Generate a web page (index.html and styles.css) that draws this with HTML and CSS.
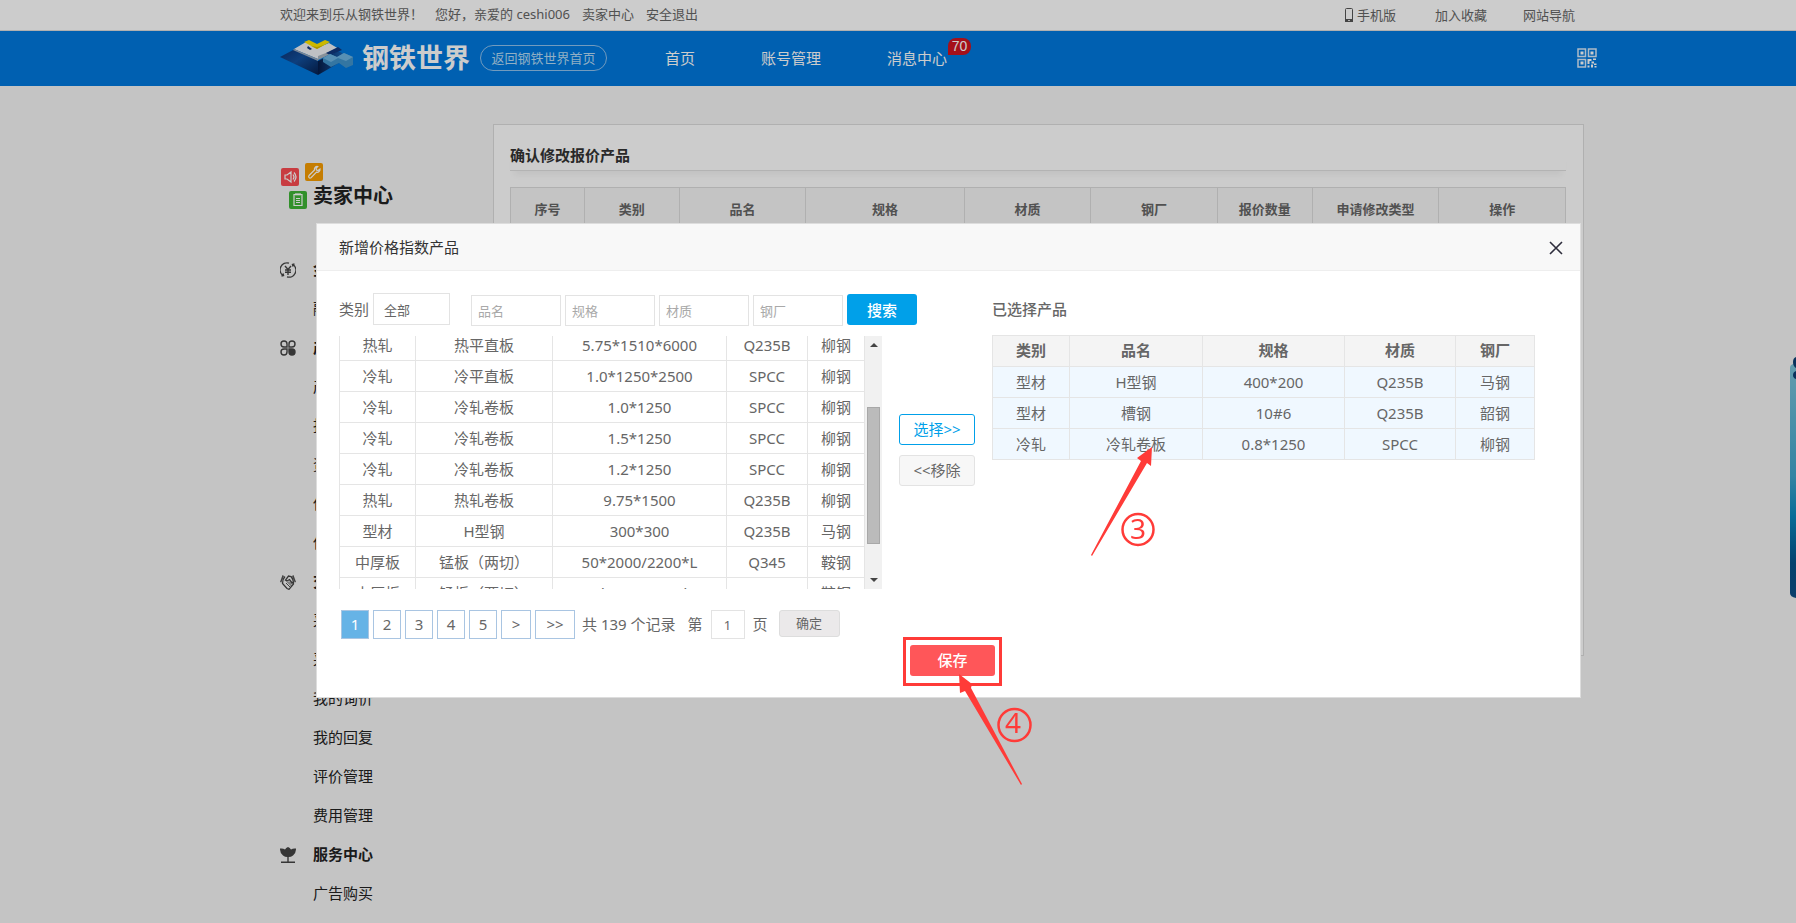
FILE: index.html
```html
<!DOCTYPE html>
<html lang="zh-CN">
<head>
<meta charset="utf-8">
<title>新增价格指数产品 - 钢铁世界</title>
<link rel="stylesheet" href="styles.css">
</head>
<body>
<div class="topbar wrap">
  <div class="topbar-left">
    <span>欢迎来到乐从钢铁世界<span class="punct">！</span></span>
    <span>您好<span class="punct">，</span>亲爱的 ceshi006</span>
    <a href="#">卖家中心</a>
    <a href="#">安全退出</a>
  </div>
  <div class="topbar-right">
    <a href="#" class="phone"><svg width="8" height="14" viewBox="0 0 8 14"><rect x="0.5" y="0.5" width="7" height="13" rx="1" fill="none" stroke="#555"/><path d="M0 11h8v3H0z" fill="#555"/><path d="M3 12h2v1H3z" fill="#ddd"/></svg>手机版</a>
    <a href="#">加入收藏</a>
    <a href="#">网站导航</a>
  </div>
</div>

<header class="header wrap">
  <div class="logo">
    <svg width="74" height="36" viewBox="0 0 74 36">
      <defs>
        <linearGradient id="lg1" x1="0" y1="0" x2="1" y2="1"><stop offset="0" stop-color="#0b3273"/><stop offset=".45" stop-color="#124f9c"/><stop offset="1" stop-color="#06204f"/></linearGradient>
        <linearGradient id="lg2" x1="0" y1="0" x2="1" y2="0"><stop offset="0" stop-color="#061c48"/><stop offset="1" stop-color="#1a63b4"/></linearGradient>
      </defs>
      <path d="M0 17 L15 9 L38 21 V35 Z" fill="url(#lg1)"/>
      <path d="M38 21 L58 11 L62 13 L64 20 L38 35Z" fill="url(#lg2)"/>
      <path d="M14 9 L26 2 L37 8 L49 3 L59 9 L38 19 Z" fill="#f0f2f5"/>
      <path d="M38 16 L59 8 V10 L38 20Z" fill="#a9b4c0"/>
      <path d="M14 9 L38 19 V21 L13 10Z" fill="#9aa9bb"/>
      <path d="M28 6 L32 9 L30 10 L27 8Z" fill="#12377c"/>
      <path d="M46 13 L58 7 L62 10 L50 15Z" fill="#12377c"/>
      <path d="M24 2 L29 0 L37 4 L45 0 L50 2 L37 9 Z" fill="#ffe600"/>
      <path d="M31 6 L37 9 L44 5 L37 7Z" fill="#d2bb00"/>
      <path d="M43 18 L50 14 L57 17 L64 13 L73 17 V25 L66 28 L59 23 L51 27 L43 22 Z" fill="#4294cb"/>
      <path d="M43 18 L50 14 L57 17 L64 13 L73 17 L66 21 L58 18 L51 22Z" fill="#6fb5e2"/>
    </svg>
    <strong>钢铁世界</strong>
  </div>
  <a href="#" class="home-link">返回钢铁世界首页</a>
  <nav class="nav">
    <a href="#">首页</a>
    <a href="#">账号管理</a>
    <a href="#" class="nav-msg">消息中心<span class="badge">70</span></a>
  </nav>
  <a href="#" class="qr" aria-label="二维码">
    <svg width="20" height="20" viewBox="0 0 20 20" fill="none" stroke="#fff" stroke-opacity=".85" stroke-width="1.500">
      <path d="M1 1h7.500v7.500H1zM11.500 1H19v7.500h-7.500zM1 11.500h7.500V19H1z"/>
      <path d="M3.500 3.500h3v3h-3zM13.500 3.500h3v3h-3zM3.500 13.500h3v3h-3zM10.500 11h4v2h-2v3h-2zM16 10.500h3V12h-3zM14.500 13.500h2.500v2h-2.500zM17 15.500h2.500V17H17zM10.500 17.500h2v2h-2zM14 16.500h2v3h-2zM17.500 18h2v1.500h-2z" fill="#fff" stroke="none"/>
    </svg>
  </a>
</header>

<div class="page wrap">
  <aside class="sidebar">
    <div class="side-title">
      <svg width="44" height="48" viewBox="0 0 44 48" fill="none" stroke="#fff" stroke-width="1.200">
        <rect x="0" y="6" width="18" height="18" rx="2" fill="#fb4c52" stroke="none"/>
        <path d="M4 13v4h2l4 3V10l-4 3zM12 12.500q2 2.500 0 5M13 10.500q4 4.500 0 9"/>
        <rect x="24" y="1" width="18" height="18" rx="2" fill="#f79d02" stroke="none"/>
        <path d="M28 13.500l5.500-5.500c-.5-2 1-3.800 3.200-3.500L35 6.500l.5 1.500 1.500.5L39 7c.2 2-1.500 3.700-3.500 3.200L30 15.700c-1.500 1-3-.7-2-2.200z"/>
        <rect x="8" y="29" width="18" height="18" rx="2" fill="#3fb536" stroke="none"/>
        <path d="M13 32.500h8v11h-8zM15 31v2.500M17 31v2.500M19 31v2.500M15 36.500h4M15 38.500h4M15 40.500h4"/>
      </svg>
      <h1>卖家中心</h1>
    </div>
    <ul class="menu">
      <li class="group"><svg width="16" height="16" viewBox="0 0 16 16" fill="none" stroke="#444" stroke-width="1.400"><path d="M3 13.500A7 7 0 0 1 9 1.100M13 2.500A7 7 0 0 1 7 14.900M1.500 14l2-.5-.5-2M14.500 2l-2 .5.5 2M5 4l3 3.500L11 4M8 7.500V13M5 8h6M5 10.300h6"/></svg><a href="#">金融服务</a></li>
      <li><a href="#">融资申请</a></li>
      <li class="group"><svg width="16" height="16" viewBox="0 0 16 16" fill="none" stroke="#444" stroke-width="1.400"><path d="M7 7H4A3 3 0 1 1 7 4zM9 7V4a3 3 0 1 1 3 3zM7 9v3a3 3 0 1 1-3-3z"/><path d="M9 9h3a3 3 0 1 1-3 3z" fill="#444"/></svg><a href="#">产品中心</a></li>
      <li><a href="#">产品管理</a></li>
      <li><a href="#">报价管理</a></li>
      <li><a href="#">资源管理</a></li>
      <li><a href="#">供应管理</a></li>
      <li><a href="#">供应发布</a></li>
      <li class="group"><svg width="16" height="16" viewBox="0 0 16 16"><path d="M2.500 1L0 8l1.300.6L4 2zM13.500 1L16 8l-1.300.6L12 2z" fill="#555"/><path d="M5 2.500Q2.500 5 2.500 9.500L7 14.500l2 .8L13.500 10Q13.500 5 11 2.500L8.500 2 5.500 6l1.500 1 2.500-1.500 3 4" fill="none" stroke="#444" stroke-width="1.300"/><path d="M6 9l4 4M7.500 8l4 4M9 7.500l3 3" stroke="#555"/></svg><a href="#">交易中心</a></li>
      <li><a href="#">采购订单</a></li>
      <li><a href="#">采购管理</a></li>
      <li><a href="#">我的询价</a></li>
      <li><a href="#">我的回复</a></li>
      <li><a href="#">评价管理</a></li>
      <li><a href="#">费用管理</a></li>
      <li class="group"><svg width="16" height="16" viewBox="0 0 16 16" fill="#444"><path d="M8 0Q10 .5 11 2.500Q13 1 16 1.500Q16.200 6 13 8.500Q11 10 8.700 10V14.500H15V16H1v-1.500h6.300V10Q5 10 3 8.500Q-.2 6 0 1.500Q3 1 5 2.500Q6 .5 8 0z"/></svg><a href="#">服务中心</a></li>
      <li><a href="#">广告购买</a></li>
    </ul>
  </aside>
  <main class="panel">
    <h2>确认修改报价产品</h2>
    <table class="quote">
      <colgroup><col style="width:7%"><col style="width:9%"><col style="width:12%"><col style="width:15%"><col style="width:12%"><col style="width:12%"><col style="width:9%"><col style="width:12%"><col style="width:12%"></colgroup>
      <thead><tr><th>序号</th><th>类别</th><th>品名</th><th>规格</th><th>材质</th><th>钢厂</th><th>报价数量</th><th>申请修改类型</th><th>操作</th></tr></thead>
    </table>
  </main>
</div>

<div class="floater">
  <svg width="6" height="242" viewBox="0 0 6 242">
    <defs><linearGradient id="fl" x1="0" y1="0" x2="0" y2="1"><stop offset="0" stop-color="#7dc4da"/><stop offset=".48" stop-color="#41a5cc"/><stop offset=".65" stop-color="#0b88be"/><stop offset=".85" stop-color="#04538a"/><stop offset="1" stop-color="#0f4f86"/></linearGradient></defs>
    <path d="M6 7H3Q0 8 0 11v225q0 4 6 5z" fill="url(#fl)"/>
    <path d="M6 0Q3 1 3 5t3 6zM6 14q-3 1-3 4t3 4z" fill="#0d3f73"/>
  </svg>
</div>

<div class="overlay">
  <section class="modal" role="dialog" aria-labelledby="dlg-title">
    <div class="modal-head">
      <h3 id="dlg-title">新增价格指数产品</h3>
      <button type="button" class="close" aria-label="关闭"><svg width="14" height="14" viewBox="0 0 14 14" stroke="#2e2d3c" stroke-width="1.600"><path d="M1 1l12 12M13 1L1 13"/></svg></button>
    </div>
    <div class="modal-body">
      <div class="columns">
        <div class="source">
          <form class="search">
            <label for="cat">类别</label>
            <select id="cat"><option>全部</option></select>
            <input type="text" placeholder="品名" aria-label="品名">
            <input type="text" placeholder="规格" aria-label="规格">
            <input type="text" placeholder="材质" aria-label="材质">
            <input type="text" placeholder="钢厂" aria-label="钢厂">
            <button type="button" class="btn-search">搜索</button>
          </form>
          <div class="list">
            <div class="rows">
              <table class="grid">
                <colgroup><col style="width:76px"><col style="width:137px"><col style="width:174px"><col style="width:81px"><col></colgroup>
                <tbody>
                  <tr><td>热轧</td><td>热平直板</td><td>5.75*1510*6000</td><td>Q235B</td><td>柳钢</td></tr>
                  <tr><td>冷轧</td><td>冷平直板</td><td>1.0*1250*2500</td><td>SPCC</td><td>柳钢</td></tr>
                  <tr><td>冷轧</td><td>冷轧卷板</td><td>1.0*1250</td><td>SPCC</td><td>柳钢</td></tr>
                  <tr><td>冷轧</td><td>冷轧卷板</td><td>1.5*1250</td><td>SPCC</td><td>柳钢</td></tr>
                  <tr><td>冷轧</td><td>冷轧卷板</td><td>1.2*1250</td><td>SPCC</td><td>柳钢</td></tr>
                  <tr><td>热轧</td><td>热轧卷板</td><td>9.75*1500</td><td>Q235B</td><td>柳钢</td></tr>
                  <tr><td>型材</td><td>H型钢</td><td>300*300</td><td>Q235B</td><td>马钢</td></tr>
                  <tr><td>中厚板</td><td>锰板<span class="punct">（</span>两切<span class="punct">）</span></td><td>50*2000/2200*L</td><td>Q345</td><td>鞍钢</td></tr>
                  <tr><td>中厚板</td><td>锰板<span class="punct">（</span>两切<span class="punct">）</span></td><td>30*2000/2200*L</td><td>Q345</td><td>鞍钢</td></tr>
                </tbody>
              </table>
            </div>
            <div class="scrollbar">
              <svg width="8" height="4" viewBox="0 0 8 4"><path d="M0 4l4-4 4 4z" fill="#444"/></svg>
              <span class="thumb"></span>
              <svg width="8" height="4" viewBox="0 0 8 4"><path d="M0 0l4 4 4-4z" fill="#444"/></svg>
            </div>
          </div>
          <div class="pager">
            <button type="button" class="on">1</button>
            <button type="button">2</button>
            <button type="button">3</button>
            <button type="button">4</button>
            <button type="button">5</button>
            <button type="button" class="next">&gt;</button>
            <button type="button" class="last">&gt;&gt;</button>
            <span class="total">共 139 个记录</span>
            <label for="pg">第</label>
            <input id="pg" type="text" value="1">
            <span>页</span>
            <button type="button" class="go">确定</button>
          </div>
        </div>
        <div class="transfer">
          <button type="button" class="pick">选择&gt;&gt;</button>
          <button type="button" class="drop">&lt;&lt;移除</button>
        </div>
        <div class="chosen">
          <h4>已选择产品</h4>
          <table class="grid picked">
            <colgroup><col style="width:77px"><col style="width:133px"><col style="width:142px"><col style="width:111px"><col></colgroup>
            <thead><tr><th>类别</th><th>品名</th><th>规格</th><th>材质</th><th>钢厂</th></tr></thead>
            <tbody>
              <tr><td>型材</td><td>H型钢</td><td>400*200</td><td>Q235B</td><td>马钢</td></tr>
              <tr><td>型材</td><td>槽钢</td><td>10#6</td><td>Q235B</td><td>韶钢</td></tr>
              <tr><td>冷轧</td><td>冷轧卷板</td><td>0.8*1250</td><td>SPCC</td><td>柳钢</td></tr>
            </tbody>
          </table>
        </div>
      </div>
      <div class="actions"><button type="button" class="save">保存</button></div>
    </div>
    <svg class="marks" width="240" height="360" viewBox="890 440 240 360">
      <rect x="904.500" y="638.500" width="96" height="46" fill="none" stroke="#ff3b38" stroke-width="3"/>
      <path d="M1152 447L1151 466L1147 463L1092 556L1091 555L1141 461L1137 458Z" fill="#ff3b38"/>
      <circle cx="1138" cy="529.500" r="15.500" fill="none" stroke="#ff3b38" stroke-width="2.500"/>
      <text x="1138" y="539" text-anchor="middle">3</text>
      <path d="M959 674L972 684L971 688L1022 784L1021 785L965 691L960 693Z" fill="#ff3b38"/>
      <circle cx="1014.500" cy="725" r="16" fill="none" stroke="#ff3b38" stroke-width="2.500"/>
      <text x="1013" y="733" text-anchor="middle">4</text>
    </svg>
  </section>
</div>
</body>
</html>
```

FILE: styles.css
```css
* { box-sizing: border-box; }
html, body { margin: 0; height: 100%; overflow: hidden; }
body {
  background: #f5f5f5;
  color: #333;
  font: 15px/20px "Noto Sans", "Noto Sans CJK SC", sans-serif;
}
a { color: inherit; text-decoration: none; }
h1, h2, h3, h4, ul { margin: 0; padding: 0; font-size: 15px; }
ul { list-style: none; }
svg { display: block; flex: none; }
button, input, select { font: inherit; color: inherit; margin: 0; padding: 0; border-radius: 0; }
table { border-collapse: collapse; table-layout: fixed; width: 100%; }
.wrap { padding-left: 280px; padding-right: 212px; }
.punct { font-family: "Noto Sans CJK TC", sans-serif; line-height: 1; }

.topbar {
  display: flex;
  justify-content: space-between;
  height: 31px;
  padding-right: 221px;
  line-height: 28px;
  font-size: 13px;
  color: #666;
  background: #fff;
  border-bottom: 1px solid #ddd;
}
.topbar-left { display: flex; gap: 12px; }
.topbar-right { display: flex; gap: 36px; line-height: 30px; }
.phone { display: flex; gap: 4px; align-items: center; margin-right: 3px; }

.header {
  display: flex;
  align-items: center;
  height: 55px;
  padding-right: 199px;
  padding-bottom: 2px;
  background: #0078de;
  color: #fff;
}
.logo { display: flex; align-items: center; gap: 8px; width: 200px; }
.logo strong { font-size: 27px; line-height: 36px; white-space: nowrap; }
.home-link {
  width: 127px;
  height: 26px;
  line-height: 24px;
  text-align: center;
  font-size: 13px;
  color: #b5dbf5;
  border: 1px solid #8fc2ee;
  border-radius: 13px;
}
.nav { display: flex; gap: 66px; margin-left: 58px; flex: 1; }
.nav-msg { position: relative; }
.badge {
  position: absolute;
  left: 61px;
  top: -10px;
  width: 23px;
  height: 17px;
  border-radius: 8px 8px 8px 0;
  background: #cf1421;
  font: 14px/17px "Liberation Sans", sans-serif;
  text-align: center;
}

.page { display: flex; justify-content: space-between; align-items: flex-start; padding-top: 38px; }
.sidebar { width: 213px; padding-top: 38px; flex: none; }
.side-title { display: flex; height: 50px; }
.side-title svg { margin-right: -11px; margin-left: 1px; }
.side-title h1 { font-size: 20px; line-height: 28px; padding-top: 20px; color: #222; margin-left: -1px; }
.menu { padding-top: 38px; }
.menu li { display: flex; align-items: center; height: 39px; padding-left: 33px; color: #222; }
.menu a { padding-bottom: 2px; }
.menu .group { padding-left: 0; gap: 17px; font-weight: bold; }

.panel { flex: 1; height: 532px; padding: 20px 17px 20px 16px; background: #fff; border: 1px solid #ddd; }
.panel h2 { padding-bottom: 5px; border-bottom: 1px solid #e0e0e0; box-shadow: 0 8px 6px -4px #f3f3f3; }
.quote { margin-top: 16px; color: #666; font-size: 13px; }
.quote th { height: 42px; padding: 0; background: #f5f5f5; border: 1px solid #ddd; }

.floater { position: fixed; right: 0; top: 357px; }

.overlay {
  position: fixed;
  inset: 0;
  display: flex;
  align-items: flex-start;
  padding: 223px 215px 0 316px;
  background: rgba(0, 0, 0, 0.2);
}
.modal { position: relative; flex: 1; background: #fff; border: 1px solid #ddd; color: #666; }
.modal-head {
  display: flex;
  justify-content: space-between;
  align-items: center;
  height: 47px;
  padding: 0 17px 0 22px;
  background: #f8f8f8;
  border-bottom: 1px solid #eee;
  color: #333;
}
.modal-head h3 { font-weight: normal; }
.close { display: flex; padding: 2px 0 0; border: 0; background: none; }
.modal-body { padding: 22px 45px 21px 22px; }
.columns { display: flex; }
.source { width: 543px; flex: none; }
/* the search button reaches past the list below it */
.search { display: flex; gap: 4px; width: 578px; height: 33px; }
.search > * { flex: none; }
.search label { line-height: 32px; }
.search select {
  appearance: none;
  width: 77px;
  height: 32px;
  margin-right: 17px;
  padding: 2px 10px 0;
  border: 1px solid #e3e3e3;
  background: #fff;
  font-size: 13px;
}
.search input { width: 90px; height: 31px; margin-top: 2px; padding: 0 6px; border: 1px solid #e3e3e3; font-size: 13px; }
.search input::placeholder { color: #a9a9a9; }
.btn-search { width: 70px; height: 31px; margin-top: 1px; border: 0; border-radius: 3px; background: #00a0e9; color: #fff; font-weight: 500; }
.list { display: flex; height: 253px; margin-top: 10px; }
.rows { flex: 1; overflow: hidden; }
.rows .grid { margin-top: -7px; }
.grid td, .grid th { height: 31px; padding: 0; border: 1px solid #e5e5e5; text-align: center; white-space: nowrap; }
.scrollbar { display: flex; flex-direction: column; align-items: center; width: 17px; padding: 7px 0; background: #f1f1f1; }
.thumb { width: 13px; height: 137px; margin: 60px 0 auto; background: #bbb; border: 1px solid #a8a8a8; }
.pager { display: flex; gap: 4px; margin: 21px 0 0 2px; line-height: 28px; white-space: nowrap; }
.pager button { width: 28px; height: 29px; padding-bottom: 1px; border: 1px solid #a9c5e2; background: #fff; line-height: 20px; }
.pager .on { background: #66b3e6; color: #fff; }
.pager .next { width: 30px; }
.pager .last { width: 40px; }
.pager .total { margin: 0 8px 0 3px; }
.pager input { width: 34px; height: 29px; margin: 0 4px; border: 1px solid #e3e3e3; text-align: center; font-size: 13px; }
.pager .go { width: 61px; height: 27px; margin-left: 7px; border: 1px solid #ddd; border-radius: 3px; background: #ebe9ea; font-size: 13px; }
.transfer { display: flex; flex-direction: column; gap: 10px; width: 76px; margin: 121px 17px 0; flex: none; }
.transfer button { height: 31px; padding-bottom: 2px; border-radius: 3px; }
.pick { border: 1px solid #00a0e9; background: #fff; color: #00a0e9; }
.drop { border: 1px solid #e3e3e3; background: #f7f7f7; }
.chosen { flex: 1; }
.chosen h4 { height: 42px; line-height: 32px; font-weight: 500; }
.picked th { padding-bottom: 2px; background: #f4f4f4; }
.picked td { background: #f0f8ff; }
.actions { display: flex; justify-content: center; margin-top: 6px; padding-left: 31px; }
.save { width: 85px; height: 31px; padding-bottom: 2px; border: 0; border-radius: 3px; background: #ff5659; color: #fff; font-weight: 500; }
.marks { position: absolute; left: 573px; top: 216px; overflow: visible; pointer-events: none; }
.marks text { fill: #ff3b38; font-size: 28px; }
```
